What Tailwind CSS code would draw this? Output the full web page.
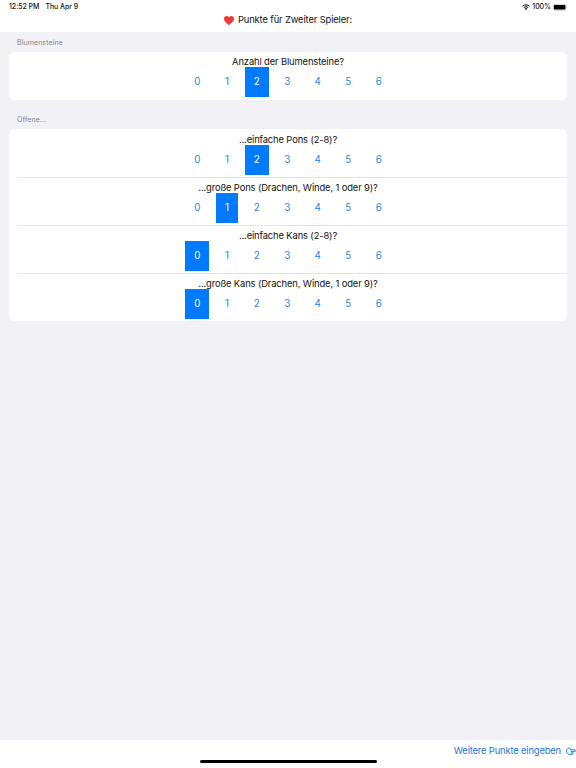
<!DOCTYPE html>
<html lang="de">
	<head>
		<meta charset="UTF-8" />
		<meta name="viewport" content="width=device-width, initial-scale=1.0" />
		<script src="https://cdn.jsdelivr.net/npm/@tailwindcss/browser@4"></script>
		<title>Punkte</title>
	</head>
	<body>
		<div
			class="flex flex-col h-screen overflow-hidden bg-[#f2f1f6] text-[#111] font-['Inter',sans-serif]"
		>
			<header class="h-8 shrink-0 bg-white">
				<div
					class="flex h-[14px] items-center justify-between pl-[9px] pr-[8px] text-[7px] font-medium leading-[14px]"
				>
					<div class="flex gap-[6px] tracking-[-0.04px]">
						<span>12:52 PM</span>
						<span>Thu Apr 9</span>
					</div>
					<div class="flex items-center gap-[2px]">
						<svg class="w-[8px] h-[6px]" viewBox="0 0 16 12" fill="none">
							<path d="M1 4.5a10 10 0 0 1 14 0M3.6 7.2a6.3 6.3 0 0 1 8.8 0" stroke="#000" stroke-width="2" />
							<path d="M8 12 5.4 9.3a3.7 3.7 0 0 1 5.2 0z" fill="#000" />
						</svg>
						<span class="tracking-[-0.05px]">100%</span>
						<svg class="w-[15px] h-[7px]" viewBox="0 0 15 7">
							<rect x=".25" y=".25" width="12.8" height="6" rx="1.6" fill="#fff" stroke="#999" stroke-width=".5" />
							<rect x=".9" y=".9" width="11.5" height="4.7" rx="1" fill="#000" />
							<path d="M13.7 2.3q1 .9 0 1.9z" fill="#888" />
						</svg>
					</div>
				</div>
				<h1
					class="flex h-[12px] items-center justify-center gap-[4px] text-[9.4px] leading-[12px]"
				>
					<svg class="w-[10px] h-[9px]" viewBox="0 0 20 18">
						<path d="M10 18C6 15 0 11 0 5.5 0 2 2.4 0 5.2 0 7.5 0 9.2 1.2 10 3c.8-1.8 2.5-3 4.8-3C17.6 0 20 2 20 5.5 20 11 14 15 10 18z" fill="#f03a30" />
					</svg>
					<span class="tracking-[-0.13px]">Punkte für Zweiter Spieler:</span>
				</h1>
			</header>

			<main class="grow px-[9px]">
				<h2 class="h-5 pl-2 pt-[5px] text-[7px] leading-[11px] tracking-[0.1px] text-[#85858a]">
					Blumensteine
				</h2>
				<section id="blumen" class="rounded-[5px] bg-white"></section>
				<h2
					class="h-[29px] pl-2 pt-[14px] text-[7px] leading-[11px] tracking-[0.1px] text-[#85858a]"
				>
					Offene...
				</h2>
				<section id="offene" class="h-48 rounded-[5px] bg-white pt-px"></section>
			</main>

			<footer class="flex h-7 shrink-0 flex-col items-center bg-white">
				<button
					class="flex h-[20px] items-center gap-[5px] self-end pt-[2px] text-[9.4px] leading-[18px] text-[#1878dc]"
				>
					<span class="tracking-[-0.16px]">Weitere Punkte eingeben</span>
					<svg class="w-[10px] h-[8px]" viewBox="0 0 20 16" fill="none" stroke="#1878dc" stroke-width="1.8" stroke-linecap="round" stroke-linejoin="round">
						<path d="M10 4.5 7.5 2C4 1.5 1 4 1 8s2.5 7 6.5 7h4c2 0 2.5-2 1.5-3 1.5-.5 1.5-2.500.5-3.2H18c2 0 2-3.3 0-3.3H8.5" />
						<path d="M13.5 8.8H10M13 12h-3" />
					</svg>
				</button>
				<div class="h-[3px] w-[177px] rounded-full bg-black"></div>
			</footer>
		</div>
		<script>
			const row = (frage, wahl) => `
				<div class="pl-2 group">
					<div class="flex h-12 flex-col items-center border-b border-[#e6e6e9] pr-2 pt-[3px] group-last:border-transparent">
						<p class="h-3 whitespace-nowrap text-[9.4px] leading-[13px] tracking-[-0.13px]">${frage}</p>
						<div class="flex gap-[6.5px]">${[0, 1, 2, 3, 4, 5, 6]
							.map(
								(n) =>
									`<button class="${n === 1 ? 'w-[22.5px]' : 'w-6'} h-[30px] text-[9.8px] leading-[30px] ${
										n === wahl ? 'bg-[#007aff] text-white' : 'text-[#2387e8]'
									}">${n}</button>`
							)
							.join('')}</div>
					</div>
				</div>`;

			document.getElementById('blumen').innerHTML = row('Anzahl der Blumensteine?', 2);
			document.getElementById('offene').innerHTML = [
				row('...einfache Pons (2-8)?', 2),
				row('...große Pons (Drachen, Winde, 1 oder 9)?', 1),
				row('...einfache Kans (2-8)?', 0),
				row('...große Kans (Drachen, Winde, 1 oder 9)?', 0),
			].join('');
		</script>
	</body>
</html>
